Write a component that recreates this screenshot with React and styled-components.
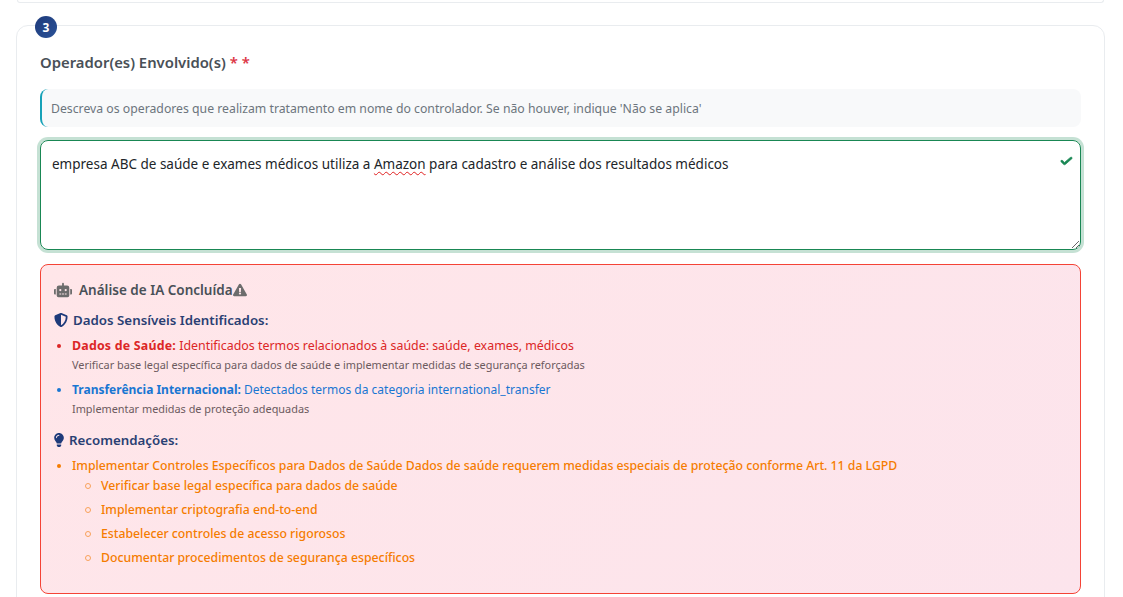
import React from 'react';
import styled, { createGlobalStyle } from 'styled-components';
import { FaRobot, FaExclamationTriangle, FaShieldAlt, FaLightbulb } from 'react-icons/fa';

const GlobalStyle = createGlobalStyle`
  html, body {
    margin: 0;
    height: 597px;
    overflow: hidden;
    background: #fff;
    font-family: "Noto Sans", "Open Sans", sans-serif;
  }
`;

const Page = styled.div`
  padding: 0 18px 0 16px;
`;

const PrevCard = styled.div`
  height: 2px;
  margin: 0 1px 0 1px;
  border: 1px solid #e9ecef;
  border-top: none;
  border-radius: 0 0 12px 12px;
`;

const Card = styled.section`
  position: relative;
  margin-top: 22px;
  padding: 24px 23px 24px;
  border: 1px solid #e9ecef;
  border-radius: 12px;
  background: #fff;
`;

const StepBadge = styled.span`
  position: absolute;
  top: -10px;
  left: 18px;
  width: 22px;
  height: 22px;
  border-radius: 50%;
  background: linear-gradient(135deg, #1e3a7a, #2a5298);
  color: #fff;
  font-size: 12px;
  font-weight: 700;
  display: flex;
  align-items: center;
  justify-content: center;
`;

const Label = styled.h3`
  margin: 0 0 15px;
  font-size: 14.85px;
  line-height: 24px;
  font-weight: 600;
  color: #495057;
`;

const Required = styled.span`
  color: #dc3545;
`;

const Hint = styled.div`
  height: 38px;
  box-sizing: border-box;
  display: flex;
  align-items: center;
  padding-left: 9px;
  margin-bottom: 13px;
  background: #f8f9fa;
  border-left: 2px solid #17a2b8;
  border-radius: 8px;
  font-size: 12.25px;
  color: #6c757d;
`;

const FieldWrap = styled.div`
  position: relative;
  margin-bottom: 14px;
`;

const TextBox = styled.div`
  box-sizing: border-box;
  height: 110px;
  padding: 13px 11px;
  border: 1px solid #198754;
  border-radius: 8px;
  box-shadow: 0 0 0 3px rgba(25, 135, 84, 0.25);
  font-size: 13.5px;
  line-height: 20px;
  color: #212529;
  overflow: auto;
  resize: vertical;
`;

const Misspelled = styled.span`
  text-decoration: underline wavy #e02020 1px;
  text-underline-offset: 2px;
`;

const ValidMark = styled.svg`
  position: absolute;
  top: 16px;
  right: 8px;
  width: 13px;
  height: 10px;
`;

const Analysis = styled.div`
  box-sizing: border-box;
  height: 330px;
  padding: 13px 13px;
  border: 1px solid #f44336;
  border-radius: 8px;
  background: linear-gradient(135deg, #ffe6e9, #fce4ec);
`;

const AnalysisTitle = styled.h5`
  margin: 0 0 8px;
  display: flex;
  align-items: center;
  font-size: 13.5px;
  line-height: 24px;
  font-weight: 600;
  color: #495057;
  svg {
    font-size: 14px;
    color: #6c6c6c;
  }
  svg:first-child {
    font-size: 18px;
    margin-right: 7px;
  }
`;

const SectionTitle = styled.h6`
  margin: 0 0 6px;
  display: flex;
  align-items: center;
  gap: 5px;
  font-size: 13.3px;
  line-height: 20px;
  font-weight: 600;
  color: #2a3f73;
  svg {
    color: #1e3a7a;
    font-size: 14px;
  }
`;

const BulbIcon = styled(FaLightbulb)`
  && {
    width: 10px;
  }
`;

const List = styled.ul`
  margin: 0 0 14px;
  padding-left: 18px;
  list-style: none;
`;

const Item = styled.li`
  position: relative;
  font-size: ${(p) => p.$size || 12}px;
  font-weight: ${(p) => p.$weight || 400};
  line-height: 20px;
  color: ${(p) => p.$color};
  margin-bottom: ${(p) => p.$gap || 0}px;
  &::before {
    content: '';
    position: absolute;
    top: 8px;
    left: -15px;
    width: 4px;
    height: 4px;
    border-radius: 50%;
    background: currentColor;
  }
`;

const AlertName = styled.strong`
  letter-spacing: 0.2px;
`;

const Detail = styled.div`
  font-size: 10.9px;
  font-weight: 400;
  line-height: 14px;
  margin-top: 2px;
  color: #6c5a5e;
`;

const SubList = styled.ul`
  margin: -2px 0 0;
  padding-left: 29px;
  list-style: none;
`;

const SubItem = styled.li`
  position: relative;
  font-size: 12.25px;
  line-height: 24px;
  &::before {
    content: '';
    position: absolute;
    top: 9px;
    left: -16px;
    width: 6px;
    height: 6px;
    box-sizing: border-box;
    border: 1.5px solid #f9a25a;
    border-radius: 50%;
  }
`;

const subItems = [
  'Verificar base legal específica para dados de saúde',
  'Implementar criptografia end-to-end',
  'Estabelecer controles de acesso rigorosos',
  'Documentar procedimentos de segurança específicos',
];

export default function App() {
  return (
    <Page>
      <GlobalStyle />
      <PrevCard />
      <Card>
        <StepBadge>3</StepBadge>
        <Label>
          Operador(es) Envolvido(s) <Required>* *</Required>
        </Label>
        <Hint>
          Descreva os operadores que realizam tratamento em nome do controlador. Se não houver, indique 'Não se aplica'
        </Hint>
        <FieldWrap>
          <TextBox>
            empresa ABC de saúde e exames médicos utiliza a <Misspelled>Amazon</Misspelled> para cadastro e análise dos
            resultados médicos
          </TextBox>
          <ValidMark viewBox="0 0 8 8" preserveAspectRatio="none">
            <path
              fill="#198754"
              stroke="#198754"
              strokeWidth="0.5"
              d="M2.3 6.73.6 4.53c-.4-1.04.46-1.4 1.1-.8l1.1 1.4 3.4-3.8c.6-.63 1.6-.27 1.2.7l-4 4.6c-.43.5-.8.4-1.1.1z"
            />
          </ValidMark>
        </FieldWrap>
        <Analysis>
          <AnalysisTitle>
            <FaRobot />
            Análise de IA Concluída
            <FaExclamationTriangle />
          </AnalysisTitle>
          <SectionTitle>
            <FaShieldAlt />
            Dados Sensíveis Identificados:
          </SectionTitle>
          <List>
            <Item $color="#dc2626" $size={12.4} $gap={8}>
              <AlertName>Dados de Saúde:</AlertName> Identificados termos relacionados à saúde: saúde, exames, médicos
              <Detail>Verificar base legal específica para dados de saúde e implementar medidas de segurança reforçadas</Detail>
            </Item>
            <Item $color="#1976d2">
              <strong>Transferência Internacional:</strong> Detectados termos da categoria international_transfer
              <Detail>Implementar medidas de proteção adequadas</Detail>
            </Item>
          </List>
          <SectionTitle>
            <BulbIcon />
            Recomendações:
          </SectionTitle>
          <List>
            <Item $color="#f57c00" $size={12.25} $weight={500}>
              Implementar Controles Específicos para Dados de Saúde Dados de saúde requerem medidas especiais de proteção
              conforme Art. 11 da LGPD
              <SubList>
                {subItems.map((text) => (
                  <SubItem key={text}>{text}</SubItem>
                ))}
              </SubList>
            </Item>
          </List>
        </Analysis>
      </Card>
    </Page>
  );
}
